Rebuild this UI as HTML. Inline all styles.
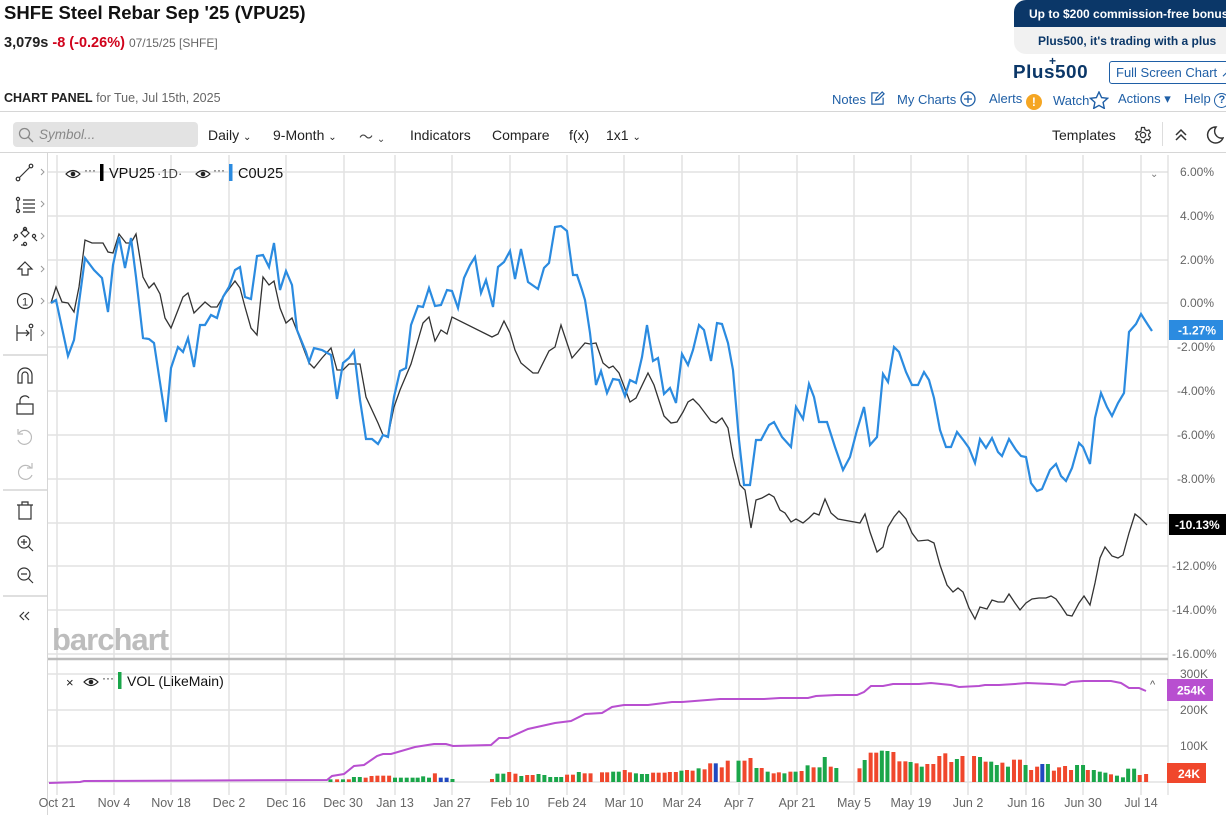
<!DOCTYPE html>
<html><head><meta charset="utf-8"><style>
*{margin:0;padding:0;box-sizing:border-box}
body{width:1226px;height:815px;overflow:hidden;background:#fff;font-family:"Liberation Sans",sans-serif;position:relative;color:#222}
.a{position:absolute;white-space:nowrap}
.lk{color:#1f5fa6;font-size:13px}
.tb{font-size:14px;color:#222}
.ax{font-size:12px;color:#666}
</style></head><body>
<div class="a" style="left:4px;top:2px;font-size:18.5px;font-weight:bold;color:#111">SHFE Steel Rebar Sep '25 (VPU25)</div>
<div class="a" style="left:4px;top:35px;font-size:14.5px"><b>3,079s</b> <b style="color:#d0021b">-8 (-0.26%)</b> <span style="font-size:12px;color:#666">07/15/25 [SHFE]</span></div>
<div class="a" style="left:1014px;top:0;width:212px;height:27px;background:#0b3768;border-top-left-radius:12px;color:#fff;font-weight:bold;font-size:12px;padding:7px 0 0 15px">Up to $200 commission-free bonus</div>
<div class="a" style="left:1014px;top:27px;width:212px;height:27px;background:#f1f1f1;border-bottom-left-radius:12px;color:#0b3768;font-weight:bold;font-size:12px;padding:7px 0 0 24px">Plus500, it's trading with a plus</div>
<div class="a" style="left:1013px;top:62px;font-size:18px;font-weight:900;color:#0b3768;letter-spacing:0.5px;transform:scaleX(1.05);transform-origin:left">Plus500</div>
<div class="a" style="left:1049px;top:54px;font-size:12px;font-weight:900;color:#0b3768">+</div>
<div class="a" style="left:1109px;top:61px;width:125px;height:23px;border:1px solid #1f5fa6;border-radius:3px;color:#1f5fa6;font-size:13px;padding:3px 0 0 6px">Full Screen Chart ↗</div>
<div class="a" style="left:4px;top:91px;font-size:12.5px"><b>CHART PANEL</b> <span style="color:#666">for Tue, Jul 15th, 2025</span></div>
<div class="a lk" style="left:832px;top:91px">Notes <svg width="15" height="15" viewBox="0 0 16 16" style="vertical-align:-2px"><path d="M9 2H2v12h12V7M6 10l1-3 6-6 2 2-6 6z" fill="none" stroke="#1f5fa6" stroke-width="1.3"/></svg></div>
<div class="a lk" style="left:897px;top:91px">My Charts <svg width="16" height="16" viewBox="0 0 16 16" style="vertical-align:-3px"><circle cx="8" cy="8" r="7" fill="none" stroke="#1f5fa6" stroke-width="1.3"/><path d="M8 4v8M4 8h8" stroke="#1f5fa6" stroke-width="1.3"/></svg></div>
<div class="a lk" style="left:989px;top:91px">Alerts <span style="display:inline-block;width:16px;height:16px;border-radius:50%;background:#f5a623;color:#fff;font-weight:bold;font-size:12px;text-align:center;line-height:16px;vertical-align:-3px">!</span></div>
<div class="a lk" style="left:1053px;top:91px">Watch<svg width="20" height="18" viewBox="0 0 20 18" style="vertical-align:-4px"><path d="M10 1l2.6 5.6 6 .7-4.5 4.1 1.2 6L10 14.4 4.7 17.4l1.2-6L1.4 7.3l6-.7z" fill="none" stroke="#1f5fa6" stroke-width="1.4"/></svg></div>
<div class="a lk" style="left:1118px;top:91px">Actions ▾</div>
<div class="a lk" style="left:1184px;top:91px">Help <span style="display:inline-block;width:15px;height:15px;border:1.3px solid #1f5fa6;border-radius:50%;font-size:11px;text-align:center;line-height:13px;font-weight:bold">?</span></div>
<div class="a" style="left:0;top:111px;width:1226px;height:1px;background:#d6d6d6"></div>
<div class="a" style="left:13px;top:122px;width:185px;height:25px;background:#e3e3e3;border-radius:4px"></div>
<svg class="a" style="left:18px;top:127px" width="16" height="16" viewBox="0 0 16 16"><circle cx="6.5" cy="6.5" r="5" fill="none" stroke="#888" stroke-width="1.3"/><path d="M10 10l5 5" stroke="#888" stroke-width="1.3"/></svg>
<div class="a" style="left:39px;top:127px;font-size:13.5px;font-style:italic;color:#888">Symbol...</div>
<div class="a tb" style="left:208px;top:127px">Daily <span style="font-size:10px">⌄</span></div>
<div class="a tb" style="left:273px;top:127px">9-Month <span style="font-size:10px">⌄</span></div>
<div class="a tb" style="left:359px;top:127px;color:#444">〜 <span style="font-size:10px">⌄</span></div>
<div class="a tb" style="left:410px;top:127px">Indicators</div>
<div class="a tb" style="left:492px;top:127px">Compare</div>
<div class="a tb" style="left:569px;top:127px">f(x)</div>
<div class="a tb" style="left:606px;top:127px">1x1 <span style="font-size:10px">⌄</span></div>
<div class="a tb" style="left:1052px;top:127px">Templates</div>
<svg class="a" style="left:1134px;top:126px" width="18" height="18" viewBox="0 0 18 18"><circle cx="9" cy="9" r="2.6" fill="none" stroke="#333" stroke-width="1.3"/><path d="M7.5 1.5h3l.5 2.2 1.8 1 2.1-.8 1.5 2.6-1.7 1.5v2l1.7 1.5-1.5 2.6-2.1-.8-1.8 1-.5 2.2h-3l-.5-2.2-1.8-1-2.1.8L1.6 13l1.7-1.5v-2L1.6 8l1.5-2.6 2.1.8 1.8-1z" fill="none" stroke="#333" stroke-width="1.2"/></svg>
<div class="a" style="left:1162px;top:122px;width:1px;height:24px;background:#ddd"></div>
<svg class="a" style="left:1173px;top:127px" width="16" height="16" viewBox="0 0 16 16"><path d="M3 8l5-5 5 5M3 13l5-5 5 5" fill="none" stroke="#333" stroke-width="1.5"/></svg>
<svg class="a" style="left:1204px;top:125px" width="20" height="20" viewBox="0 0 20 20"><path d="M12 2a8 8 0 1 0 7 11A7 7 0 0 1 12 2z" fill="none" stroke="#333" stroke-width="1.5"/></svg>
<div class="a" style="left:0;top:152px;width:1226px;height:1px;background:#d6d6d6"></div>

<svg class="a" style="left:0;top:153px" width="47" height="662" viewBox="0 153 47 662" fill="none" stroke="#333" stroke-width="1.2">
<circle cx="18" cy="179" r="1.8"/><circle cx="31" cy="166" r="1.8"/><path d="M19 178l11-11"/>
<circle cx="18" cy="199" r="1.6"/><circle cx="18" cy="211" r="1.6"/><path d="M18 201v8M23 200h12M23 204h12M23 208h12M23 212h12"/>
<path d="M25 229l4 4-4 4-4-4zM17 237l-4 4M33 237l4 4M25 245l-4 0"/><circle cx="25" cy="229" r="1.6"/><circle cx="16" cy="236" r="1.6"/><circle cx="34" cy="236" r="1.6"/><circle cx="25" cy="244" r="1.6"/>
<path d="M25 262l7 7h-4v6h-6v-6h-4z"/>
<circle cx="25" cy="301" r="7.5"/><text x="22" y="305.5" font-size="11" fill="#333" stroke="none" font-family="Liberation Sans">1</text>
<path d="M17 325v16M17 333h12M26 330l3 3-3 3M31 329v12"/><circle cx="31" cy="326" r="1.8"/>
<path d="M18 383v-8a7 7 0 0 1 14 0v8h-4v-8a3 3 0 0 0-6 0v8z"/>
<path d="M17 404h16v10H17zM20 404v-4a5 5 0 0 1 9-2"/>
<path stroke="#bbb" d="M19 433a7 7 0 1 1-1 7M18 429v5h5"/>
<path stroke="#bbb" d="M31 468a7 7 0 1 0 1 7M32 463v5h-5"/>
<path d="M17 505h16M22 505v-3h6v3M19 505v14h12v-14"/>
<circle cx="24" cy="542" r="6"/><path d="M28.5 546.5l4.5 4.5M21 542h6M24 539v6"/>
<circle cx="24" cy="574" r="6"/><path d="M28.5 578.5l4.5 4.5M21 574h6"/>
<path d="M24 612l-4 4 4 4M29 612l-4 4 4 4"/>
<g stroke="#999" stroke-width="1"><path d="M41 169l3 3-3 3M41 201l3 3-3 3M41 233l3 3-3 3M41 266l3 3-3 3M41 298l3 3-3 3M41 330l3 3-3 3"/></g>
<path stroke="#ccc" d="M3 355h44M3 490h44M3 596h44"/>
</svg>
<div class="a" style="left:47px;top:153px;width:1px;height:662px;background:#d6d6d6"></div>

<svg class="a" style="left:0;top:0" width="1226" height="815" id="ch">
<g stroke="#e2e2e2" stroke-width="1.5">
<path d="M57 155V795M114 155V795M171 155V795M229 155V795M286 155V795M344 155V795M395 155V795M452 155V795M510 155V795M567 155V795M624 155V795M682 155V795M739 155V795M797 155V795M854 155V795M911 155V795M968 155V795M1026 155V795M1083 155V795M1141 155V795"/>
<path d="M48 172H1168M48 216H1168M48 260H1168M48 303H1168M48 347H1168M48 391H1168M48 435H1168M48 479H1168M48 523H1168M48 566H1168M48 610H1168M48 654H1168M48 674H1168M48 710H1168M48 746H1168M48 782H1168"/>
</g>
<path d="M1168 155V795" stroke="#d6d6d6"/>
<path d="M48 659H1168" stroke="#bbb" stroke-width="2.5"/>
<text x="52" y="650" font-size="31" font-weight="bold" fill="#bdbdbd" font-family="Liberation Sans" letter-spacing="-1">barchart</text>
<g id="bars"></g>
<polyline fill="none" stroke="#b84fd0" stroke-width="2" points="49,783 80,782 84,781 327,780 332,776 344,774 354,766 364,765 377,756 383,754 391,754 415,747 434,744 446,744 453,746 491,745 499,738 508,738 528,729 555,723 571,721 585,714 602,713 612,707 624,705 648,705 672,702 682,702 720,699 764,699 780,698 808,698 816,696 836,695 857,695 864,692 871,686 883,686 893,684 919,684 931,683 951,685 959,687 979,686 985,685 999,685 1015,684 1027,683 1051,684 1065,685 1071,682 1083,681 1111,681 1121,683 1129,688 1139,688 1146,691"/>
<polyline fill="none" stroke="#333" stroke-width="1.3" points="51,303 56,287 62,302 68,303 74,312 79,287 85,240 92,243 103,243 108,252 113,253 119,234 126,243 131,243 136,234 143,277 149,288 154,283 160,294 165,318 171,328 178,310 183,297 188,293 194,313 205,302 211,307 217,307 223,297 235,281 240,288 245,307 251,328 257,335 263,277 269,285 274,281 280,308 286,323 292,318 297,331 309,363 314,368 322,358 331,348 337,370 343,370 349,364 360,364 366,397 378,423 383,435 388,436 394,407 400,390 411,364 423,323 429,317 435,341 441,330 447,334 452,317 492,337 498,334 504,321 510,333 515,350 521,363 533,373 538,373 549,351 555,347 561,325 572,358 585,343 590,344 596,343 603,363 609,368 613,366 619,373 630,402 636,398 648,373 654,385 664,416 671,423 677,422 683,412 688,402 693,399 699,405 711,421 716,423 722,418 728,428 733,457 740,485 745,490 751,528 756,500 762,498 769,494 774,497 780,510 785,513 791,522 796,519 803,523 809,518 814,513 819,515 825,499 831,513 838,519 860,523 865,514 870,532 877,552 883,547 888,527 894,517 899,511 906,519 912,533 918,541 928,540 934,543 940,565 947,585 953,592 958,588 963,592 969,608 975,619 980,607 987,609 992,600 998,602 1004,602 1009,594 1015,603 1020,610 1026,603 1032,599 1039,598 1046,598 1051,596 1056,599 1061,606 1067,615 1072,616 1079,603 1084,596 1090,605 1095,583 1100,558 1105,547 1112,556 1118,558 1123,555 1129,533 1135,514 1140,518 1147,525"/>
<polyline fill="none" stroke="#2b8be0" stroke-width="2.2" points="51,303 56,300 68,356 74,340 85,258 94,270 102,278 108,312 113,265 119,237 125,268 131,238 136,277 143,338 149,339 154,343 166,422 171,368 178,347 183,352 188,338 194,367 200,325 205,325 211,315 217,318 223,297 229,287 235,270 240,267 245,297 251,299 257,256 263,255 269,267 274,243 280,290 286,271 292,285 297,330 306,352 309,362 314,348 322,350 331,355 337,399 343,363 349,358 354,351 360,400 366,439 372,439 378,444 383,435 388,437 394,397 400,371 406,368 411,325 418,306 423,307 429,288 435,306 441,305 447,290 452,291 458,308 464,278 470,265 475,257 481,293 486,280 493,307 498,267 504,262 510,251 515,279 521,249 528,282 538,289 544,268 549,263 555,227 561,226 567,231 573,275 577,275 582,290 585,300 590,333 596,385 601,371 607,393 613,379 619,380 625,396 630,380 636,383 642,357 647,325 653,361 658,358 664,394 670,388 676,403 682,354 688,365 693,350 699,325 704,330 711,361 717,323 722,324 728,343 733,370 739,440 744,485 750,485 756,440 761,440 769,425 774,422 782,437 791,447 796,407 803,419 809,384 814,397 819,422 827,422 835,447 843,470 850,457 857,430 864,407 870,445 877,437 883,374 888,382 894,347 899,352 906,372 912,385 918,385 924,372 929,380 934,398 940,430 946,447 951,447 957,432 964,441 969,448 975,463 980,439 986,448 992,438 998,452 1002,456 1009,439 1016,450 1021,456 1026,457 1031,483 1037,491 1042,489 1050,470 1056,464 1061,476 1066,481 1072,468 1079,443 1083,447 1090,464 1095,418 1101,393 1107,407 1112,416 1118,403 1124,393 1129,332 1136,324 1141,314 1148,325 1152,331"/>
<g font-family="Liberation Sans" font-size="12" fill="#666">
<text x="1180" y="176">6.00%</text><text x="1180" y="220">4.00%</text><text x="1180" y="264">2.00%</text><text x="1180" y="307">0.00%</text><text x="1177" y="351">-2.00%</text><text x="1177" y="395">-4.00%</text><text x="1177" y="439">-6.00%</text><text x="1177" y="483">-8.00%</text><text x="1172" y="570">-12.00%</text><text x="1172" y="614">-14.00%</text><text x="1172" y="658">-16.00%</text>
<text x="1180" y="678">300K</text><text x="1180" y="714">200K</text><text x="1180" y="750">100K</text>
</g>
<rect x="1169" y="320" width="54" height="20" fill="#2b8be0"/><text x="1178" y="334.5" font-family="Liberation Sans" font-size="12" font-weight="bold" fill="#fff">-1.27%</text>
<rect x="1169" y="514" width="57" height="21" fill="#000"/><text x="1175" y="529" font-family="Liberation Sans" font-size="12" font-weight="bold" fill="#fff">-10.13%</text>
<rect x="1167" y="679" width="46" height="22" fill="#b84fd0"/><text x="1177" y="694.5" font-family="Liberation Sans" font-size="12" font-weight="bold" fill="#fff">254K</text>
<rect x="1167" y="763" width="39" height="20" fill="#f0472c"/><text x="1178" y="778" font-family="Liberation Sans" font-size="12" font-weight="bold" fill="#fff">24K</text>
<text x="1150" y="177" font-size="10" fill="#777" font-family="Liberation Sans">⌄</text>
<text x="1150" y="688" font-size="11" fill="#555" font-family="Liberation Sans">^</text>
<g font-family="Liberation Sans" font-size="12.5" fill="#666" text-anchor="middle">
<text x="57" y="807">Oct 21</text><text x="114" y="807">Nov 4</text><text x="171" y="807">Nov 18</text><text x="229" y="807">Dec 2</text><text x="286" y="807">Dec 16</text><text x="343" y="807">Dec 30</text><text x="395" y="807">Jan 13</text><text x="452" y="807">Jan 27</text><text x="510" y="807">Feb 10</text><text x="567" y="807">Feb 24</text><text x="624" y="807">Mar 10</text><text x="682" y="807">Mar 24</text><text x="739" y="807">Apr 7</text><text x="797" y="807">Apr 21</text><text x="854" y="807">May 5</text><text x="911" y="807">May 19</text><text x="968" y="807">Jun 2</text><text x="1026" y="807">Jun 16</text><text x="1083" y="807">Jun 30</text><text x="1141" y="807">Jul 14</text>
</g>
<g font-family="Liberation Sans">
<path d="M66 174q7-7 14 0q-7 7-14 0z" fill="none" stroke="#222" stroke-width="1.2"/><circle cx="73" cy="174" r="2.3" fill="#222"/>
<text x="84" y="174" font-size="12" fill="#222">···</text>
<rect x="100" y="164" width="3.5" height="17" fill="#000"/>
<text x="109" y="178" font-size="14.5" fill="#111">VPU25</text><text x="157" y="178" font-size="13" fill="#444">·1D·</text>
<path d="M196 174q7-7 14 0q-7 7-14 0z" fill="none" stroke="#222" stroke-width="1.2"/><circle cx="203" cy="174" r="2.3" fill="#222"/>
<text x="213" y="174" font-size="12" fill="#222">···</text>
<rect x="229" y="164" width="3.5" height="17" fill="#2b8be0"/>
<text x="238" y="178" font-size="14.5" fill="#111">C0U25</text>
<text x="66" y="687" font-size="13" fill="#222">×</text>
<path d="M84 682q7-7 14 0q-7 7-14 0z" fill="none" stroke="#222" stroke-width="1.2"/><circle cx="91" cy="682" r="2.3" fill="#222"/>
<text x="102" y="682" font-size="12" fill="#222">···</text>
<rect x="118" y="672" width="3.5" height="17" fill="#1aa64a"/>
<text x="127" y="686" font-size="14" fill="#111">VOL (LikeMain)</text>
</g>
</svg>
<script>
(function(){
var R='#f0472c',G='#1aa64a',B='#2049c0',ns='http://www.w3.org/2000/svg',g=document.getElementById('bars');
function add(x,top,c){var r=document.createElementNS(ns,'rect');r.setAttribute('x',x-2);r.setAttribute('y',top);r.setAttribute('width',4);r.setAttribute('height',782-top);r.setAttribute('fill',c);g.appendChild(r);}
var a=[[845,'g',538],[862,'r',538],[877,'g',538],[892,'r',538],[905,'g',531],[920,'g',531],[935,'r',533],[950,'r',528],[965,'r',527],[980,'r',527],[995,'r',527],[1010,'g',533],[1025,'g',533],[1040,'g',533],[1055,'g',533],[1068,'g',533],[1082,'g',529],[1097,'g',533],[1112,'r',520],[1127,'b',533],[1142,'b',533],[1157,'g',537],[1258,'r',537],[1272,'g',521],[1287,'g',521],[1302,'r',516],[1318,'r',521],[1333,'g',528],[1348,'r',525],[1362,'r',525],[1377,'g',522],[1392,'g',525],[1407,'g',531],[1422,'g',531],[1435,'g',531],[1450,'r',524],[1465,'r',524],[1480,'g',516],[1495,'r',520],[1510,'r',520]];
var C={r:R,g:G,b:B};
a.forEach(function(v){add(v[0]/2.557,600+v[2]/3,C[v[1]]);});
var b=[[5,'r',337],[18,'r',337],[33,'g',335],[47,'g',335],[62,'r',330],[75,'r',337],[90,'g',340],[105,'g',342],[118,'g',342],[133,'r',338],[147,'r',338],[162,'r',338],[175,'r',336],[190,'r',336],[204,'g',332],[218,'r',330],[232,'r',332],[247,'g',325],[262,'r',328],[276,'r',310],[290,'b',310],[305,'r',322],[320,'r',302],[347,'g',302],[362,'r',302],[377,'r',294],[392,'g',324],[405,'r',324],[420,'g',335],[435,'r',340],[448,'r',337],[462,'g',340],[477,'r',335],[490,'g',335],[505,'r',333],[520,'g',316],[535,'r',322],[550,'g',322],[563,'g',291],[578,'r',320],[592,'g',324],[650,'r',325],[663,'g',300],[678,'r',278],[692,'r',278],[706,'g',272],[720,'g',273],[735,'r',276],[750,'r',304],[765,'r',304],[778,'g',306],[793,'r',310],[806,'g',320],[820,'r',312],[835,'r',312],[850,'r',288],[865,'r',280],[880,'r',306],[894,'g',297],[908,'r',288],[937,'r',288],[952,'g',291],[966,'r',305],[980,'g',305],[994,'g',315],[1008,'r',308],[1022,'g',320],[1037,'r',299],[1052,'r',299],[1066,'g',315],[1080,'r',330],[1095,'r',320],[1108,'b',312],[1122,'g',312],[1137,'r',332],[1150,'r',322],[1165,'r',318],[1180,'r',330],[1195,'g',315],[1210,'g',315],[1222,'r',330],[1237,'g',330],[1252,'g',335],[1266,'g',338],[1280,'r',343],[1295,'g',347],[1310,'g',352],[1323,'g',326],[1338,'g',326],[1352,'r',345],[1368,'r',342]];
b.forEach(function(v){add(600+v[0]/2.505,660+v[2]/3,C[v[1]]);});
})();
</script>
</body></html>
